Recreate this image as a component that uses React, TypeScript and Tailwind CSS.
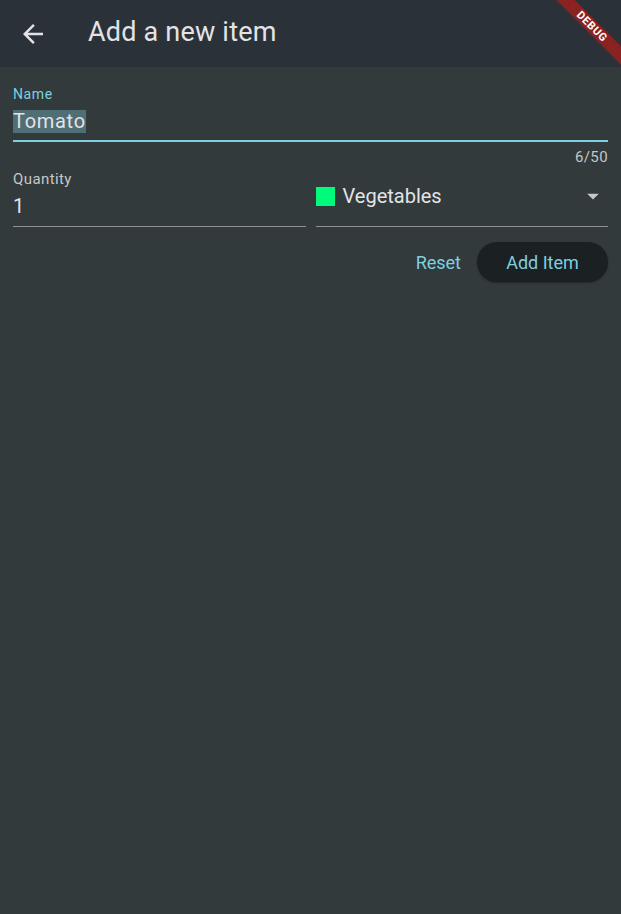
import { useState } from "react";

const font = { fontFamily: "Roboto, 'Noto Sans', sans-serif" };

export default function App() {
  const [name, setName] = useState("Tomato");
  const [qty, setQty] = useState("1");

  return (
    <div className="relative h-[914px] w-full overflow-hidden bg-[#323a3c] text-[#e3e3e6]" style={font}>
      {/* app bar */}
      <div className="flex h-[67px] items-center bg-[#2b3139]">
        <button type="button" className="ml-[18px] flex h-[30px] w-[30px] items-center justify-center text-[#e3e3e6]">
          <svg width="30" height="30" viewBox="0 0 24 24" fill="currentColor">
            <path d="M20 11H7.83l5.59-5.59L12 4l-8 8 8 8 1.41-1.41L7.83 13H20v-2z" />
          </svg>
        </button>
        <h1 className="mb-[2px] ml-[40px] text-[27px] leading-none tracking-[0.2px] text-[#e3e3e6]">Add a new item</h1>
      </div>

      {/* debug banner */}
      <div className="pointer-events-none absolute right-[-26px] top-[20px] h-[13px] w-[110px] rotate-45 bg-[#8b2222] text-center text-[11px] font-bold leading-[13px] tracking-[0.6px] text-white">
        DEBUG
      </div>

      <div className="px-[13px]">
        {/* name */}
        <div className="pt-[19px]">
          <div className="text-[14px] leading-[16px] tracking-[0.6px] text-[#7ecfe0]">Name</div>
          <div className="mt-[8px] flex h-[23px] items-center">
            <span className="bg-[#4f6e75] text-[20px] leading-[23px] tracking-[0.7px] text-[#e3e3e6]">{name}</span>
            <input
              className="sr-only"
              value={name}
              onChange={(e) => setName(e.target.value)}
            />
          </div>
          <div className="mt-[7px] h-[2px] bg-[#7ecfe0]" />
          <div className="mt-[6px] text-right text-[15px] leading-[18px] tracking-[0.4px] text-[#c5c7c9]">{name.length}/50</div>
        </div>

        {/* quantity + category */}
        <div className="mt-[4px] flex gap-[10px]">
          <div className="flex-1">
            <div className="text-[15px] leading-[18px] tracking-[0.4px] text-[#c5c7c9]">Quantity</div>
            <input
              className="mt-[6px] block h-[24px] w-full bg-transparent text-[20px] leading-[24px] text-[#e3e3e6] outline-none"
              value={qty}
              onChange={(e) => setQty(e.target.value)}
            />
            <div className="mt-[8px] h-px bg-[#8d9194]" />
          </div>
          <div className="flex-1">
            <div className="flex h-[56px] items-center pb-[4px]">
              <span className="h-[19px] w-[19px] bg-[#00fa7b]" />
              <span className="ml-[8px] flex-1 text-[20px] text-[#e3e3e6]">Vegetables</span>
              <svg width="28" height="28" viewBox="0 0 24 24" fill="#c5c7c9" className="mr-[1px]">
                <path d="M7 10l5 5 5-5z" />
              </svg>
            </div>
            <div className="h-px bg-[#8d9194]" />
          </div>
        </div>

        {/* actions */}
        <div className="mt-[15px] flex items-center justify-end gap-[16px]">
          <button type="button" className="text-[18px] text-[#7ecfe0]">
            Reset
          </button>
          <button
            type="button"
            className="h-[40px] w-[131px] rounded-full bg-[#1b2023] text-[18px] text-[#7ecfe0] shadow-[0_1px_2px_rgba(0,0,0,0.3)]"
          >
            Add Item
          </button>
        </div>
      </div>
    </div>
  );
}
